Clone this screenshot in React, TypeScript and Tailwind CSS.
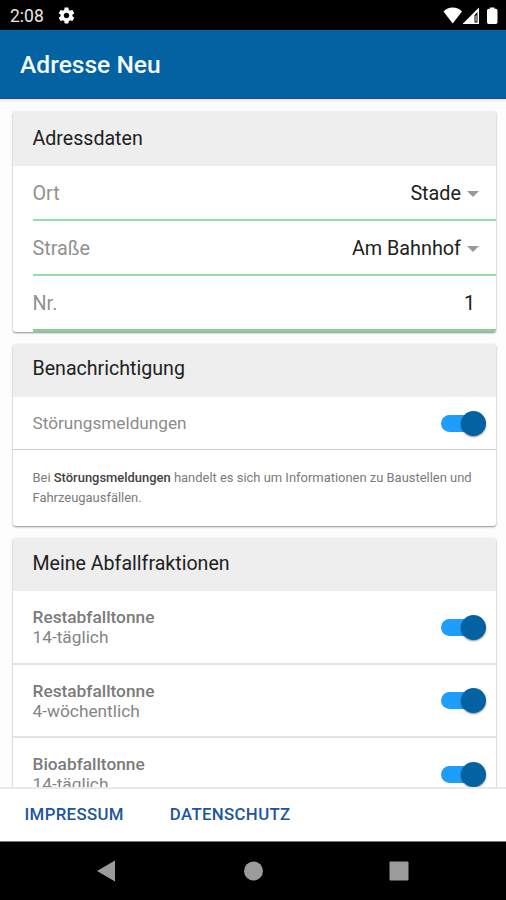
import { useState } from "react";
import type { ReactNode } from "react";

const ADDRESS_FIELDS = [
  { label: "Ort", value: "Stade" },
  { label: "Straße", value: "Am Bahnhof" },
];

const FRACTIONS = [
  { name: "Restabfalltonne", interval: "14-täglich" },
  { name: "Restabfalltonne", interval: "4-wöchentlich" },
  { name: "Bioabfalltonne", interval: "14-täglich" },
];

const Toggle = () => {
  const [on, setOn] = useState(true);

  return (
    <button
      role="switch"
      aria-checked={on}
      onClick={() => setOn(!on)}
      className="flex h-[25px] w-[45px] shrink-0 items-center"
    >
      <span className={`h-[17px] w-[38px] rounded-full ${on ? "bg-[#1e9dfb]" : "bg-gray-300"}`} />
      <span
        className={`size-[25px] shrink-0 rounded-full bg-[#0262a2] shadow-[0_1px_2px_rgba(0,0,0,0.45)] ${on ? "-ml-[18px]" : "-ml-[38px]"}`}
      />
    </button>
  );
};

const Card = ({ title, titleClass, children }: { title: string; titleClass: string; children: ReactNode }) => (
  <section className="ml-[12.5px] mr-[10px] shrink-0 overflow-hidden rounded-[3px] bg-white shadow-[0_1px_2px_rgba(0,0,0,0.45)]">
    <h2 className={`flex items-center bg-[#eeeeee] pl-5 text-[19.6px] leading-6 text-[#212121] ${titleClass}`}>
      {title}
    </h2>
    {children}
  </section>
);

export default function App() {
  return (
    <div className="flex h-[900px] w-[506px] flex-col overflow-hidden bg-[#fdfdfd] font-['Roboto',sans-serif]">
      {/* Status bar */}
      <div className="flex h-[30px] shrink-0 items-center bg-black pl-[10px] pr-[7px] pt-[2px] text-[#e8e8e8]">
        <span className="w-[47px] text-[17.5px] leading-5">2:08</span>
        <svg className="-mt-px" width="19" height="19" viewBox="0 0 24 24" fill="white">
          <path d="M19.43 12.98c.04-.32.07-.64.07-.98s-.03-.66-.07-.98l2.11-1.65c.19-.15.24-.42.12-.64l-2-3.46c-.12-.22-.39-.3-.61-.22l-2.49 1c-.52-.4-1.08-.73-1.69-.98l-.38-2.65C14.46 2.18 14.25 2 14 2h-4c-.25 0-.46.18-.49.42l-.38 2.65c-.61.25-1.17.59-1.69.98l-2.49-1c-.23-.09-.49 0-.61.22l-2 3.46c-.13.22-.07.49.12.64l2.11 1.65c-.04.32-.07.65-.07.98s.03.66.07.98l-2.11 1.65c-.19.15-.24.42-.12.64l2 3.46c.12.22.39.3.61.22l2.49-1c.52.4 1.08.73 1.69.98l.38 2.65c.03.24.24.42.49.42h4c.25 0 .46-.18.49-.42l.38-2.65c.61-.25 1.17-.59 1.69-.98l2.49 1c.23.09.49 0 .61-.22l2-3.46c.12-.22.07-.49-.12-.64l-2.11-1.65zM12 15.5c-1.93 0-3.500-1.570-3.500-3.500s1.570-3.500 3.500-3.500 3.500 1.570 3.500 3.500-1.570 3.500-3.500 3.500z" />
        </svg>
        <svg className="ml-auto -mt-px" width="56" height="18" viewBox="0 0 56 18" fill="white">
          <path d="M0.500 4.500C5-0.800 14.500-0.800 19 4.500L9.700 16.500Z" />
          <path fillRule="evenodd" d="M19.500 17L36 0.500v16.500ZM31.500 8v7.500h3V5Z" />
          <path d="M32.500 9l1-1v6.500h-1Z" />
          <path d="M47 0.500h4.500v1.200h1.200q1.800 0 1.800 1.800v11.800q0 1.700-1.700 1.700h-7.100q-1.700 0-1.700-1.700v-11.800q0-1.800 1.800-1.800h1.200Z" />
        </svg>
      </div>

      {/* App bar */}
      <header className="flex h-[69px] shrink-0 items-center border-b border-[#1b4f8c] bg-[#0262a2] pl-5 pt-px shadow-[0_2px_2px_rgba(120,60,60,0.12)]">
        <h1 className="text-[24.6px] font-medium leading-8 text-[#f4f9fd]">Adresse Neu</h1>
      </header>

      {/* Scrolling form */}
      <main className="flex min-h-0 flex-1 flex-col gap-3 overflow-hidden pt-3">
        <Card title="Adressdaten" titleClass="h-[55px]">
          <div className="ml-5">
            {ADDRESS_FIELDS.map((field) => (
              <div
                key={field.label}
                className="flex h-[55px] items-center border-b-2 border-[#93dfa5] pr-[17px] pt-[2px] text-[19.8px]"
              >
                <span className="text-[#919191]">{field.label}</span>
                <span className="ml-auto text-[#212121]">{field.value}</span>
                <svg className="ml-[6px]" width="12" height="6" viewBox="0 0 12 6" fill="#999999">
                  <path d="M0 0h12L6 6Z" />
                </svg>
              </div>
            ))}
            <div className="flex h-[55.5px] items-center border-b-[3px] border-[#8bcb9e] pr-[21px] pt-[3px] text-[19.8px]">
              <span className="text-[#919191]">Nr.</span>
              <span className="ml-auto text-[#212121]">1</span>
            </div>
          </div>
        </Card>

        <Card title="Benachrichtigung" titleClass="h-[53.5px] pb-[2px]">
          <div className="flex h-[53px] items-center border-b border-[#cccccc] pl-5 pr-[10px]">
            <span className="flex-1 pt-[2px] text-[17.2px] text-[#8c8c8c]">Störungsmeldungen</span>
            <Toggle />
          </div>
          <p className="h-[75.5px] pl-5 pt-[18px] text-[12.95px] leading-5 whitespace-nowrap text-[#7b7b7b]">
            Bei <b className="font-medium text-[#424242]">Störungsmeldungen</b> handelt es sich um Informationen zu Baustellen und
            <br />
            Fahrzeugausfällen.
          </p>
        </Card>

        <Card title="Meine Abfallfraktionen" titleClass="h-[53.5px] pb-px">
          {FRACTIONS.map((fraction, idx) => (
            <div key={idx} className="flex h-[73.5px] items-center border-b-2 border-[#e4e4e4] pl-5 pr-[10px] pt-px">
              <div className="flex-1 text-[17.3px] leading-5 text-[#858585]">
                <div className="font-medium text-[#7b7b7b]">{fraction.name}</div>
                <div>{fraction.interval}</div>
              </div>
              <Toggle />
            </div>
          ))}
        </Card>
      </main>

      {/* Footer links */}
      <footer className="flex h-[55px] shrink-0 items-center gap-[46px] border-b border-t-2 border-b-[#777777] border-t-[#e9e9e9] bg-white pl-[24.5px] text-[16.8px] font-medium tracking-[0.35px] text-[#1d559e]">
        <button>IMPRESSUM</button>
        <button>DATENSCHUTZ</button>
      </footer>

      {/* Android navigation */}
      <nav className="flex h-[58px] shrink-0 items-center bg-black pl-[96px]">
        <svg width="314" height="22" viewBox="0 0 314 22" fill="#9b9b9b">
          <path d="M1 11L19 0.500v21Z" />
          <circle cx="157.500" cy="11" r="9.500" />
          <rect x="293.500" y="1.500" width="19" height="19" rx="1" />
        </svg>
      </nav>
    </div>
  );
}
